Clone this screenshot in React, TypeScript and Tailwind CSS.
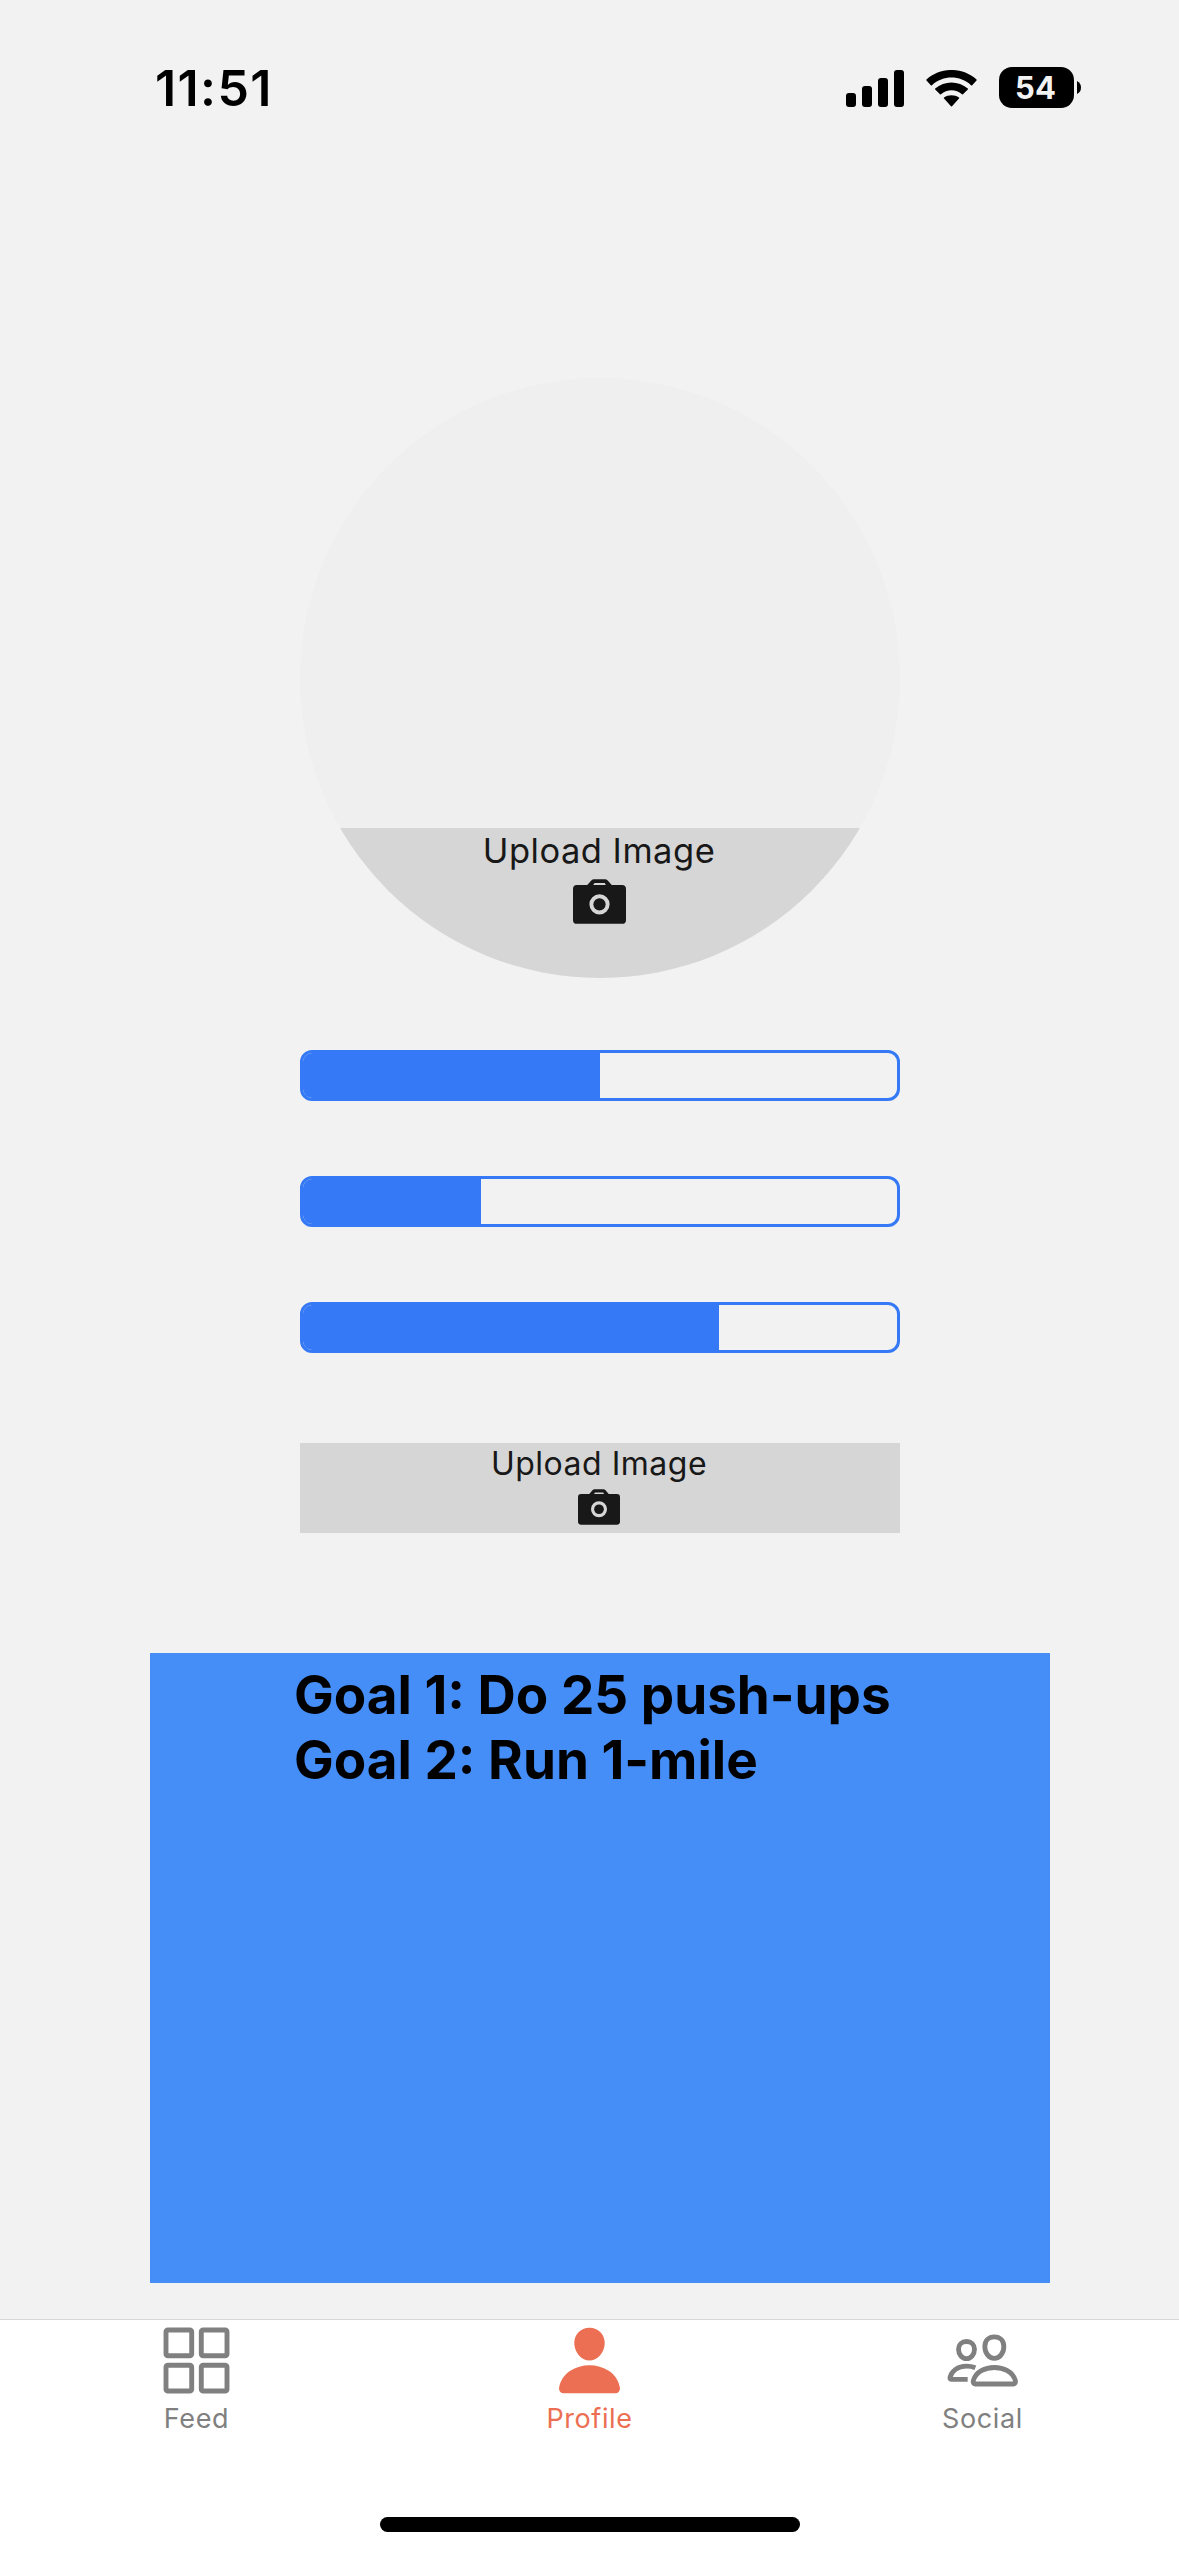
import { IoPerson } from 'react-icons/io5';
import { clsx } from 'clsx';

const progress = [50, 30, 70];
const goals = ['Goal 1: Do 25 push-ups', 'Goal 2: Run 1-mile'];

const tabs = [
  { label: 'Feed', icon: GridIcon, active: false },
  { label: 'Profile', icon: IoPerson, active: true },
  { label: 'Social', icon: PeopleIcon, active: false },
];

function GridIcon({ className }: { className?: string }) {
  return (
    <svg viewBox="0 0 75 75" className={className} fill="none" stroke="currentColor" strokeWidth="4.900" aria-hidden="true">
      <rect x="7" y="7" width="25.700" height="25.700" rx="1.800" />
      <rect x="42.300" y="7" width="25.700" height="25.700" rx="1.800" />
      <rect x="7" y="42.300" width="25.700" height="25.700" rx="1.800" />
      <rect x="42.300" y="42.300" width="25.700" height="25.700" rx="1.800" />
    </svg>
  );
}

function PeopleIcon({ className }: { className?: string }) {
  return (
    <svg viewBox="75 70 225 225" className={className} fill="none" stroke="currentColor" strokeWidth="14.500" aria-hidden="true">
      <path d="M251.500 141C251.500 160 239 176 223 176S194.500 160 194.500 141C194.500 123 206 111.500 223 111.500S251.500 123 251.500 141Z" />
      <path d="M163.500 149C163.500 164 153 177 139.500 177S115.500 164 115.500 149C115.500 135 125 125.500 139.500 125.500S163.500 135 163.500 149Z" />
      <path d="M166 253H280Q288 252 286 243C279 216 250 203.500 223 203.500S167 216 160 243Q158 252 166 253Z" />
      <path d="M166 204C157 200.500 148 199.500 139 199.500C113 199.500 95 214 90 233Q89 239 95 239H143" />
    </svg>
  );
}

function CameraIcon({ className }: { className?: string }) {
  return (
    <svg viewBox="0 0 160 135" className={className} fill="currentColor" aria-hidden="true">
      <path
        fillRule="evenodd"
        d="M12 18H43L56 3Q59 0 63 0H97Q101 0 104 3L117 18H148Q160 18 160 30V123Q160 135 148 135H12Q0 135 0 123V30Q0 18 12 18ZM61 18H99L96 12H65ZM80 45.500A30.500 30.500 0 1 0 80 106.500A30.500 30.500 0 1 0 80 45.500Z"
      />
      <circle cx="80" cy="76" r="18.500" />
    </svg>
  );
}

function StatusBar() {
  return (
    <header className="flex h-[378px] items-start justify-between pl-[155px] pr-[98px] pt-[58px] text-black">
      <span className="text-[50px] font-semibold leading-[60px] tracking-[1.4px]">11:51</span>
      <div className="flex items-center pt-[9px]">
        <svg viewBox="0 0 58 37" className="mr-[22px] mt-[1px] h-[37px] w-[58px]">
          <rect y="23" width="10" height="14" rx="3" />
          <rect x="16" y="16" width="10" height="21" rx="3" />
          <rect x="32" y="8" width="10" height="29" rx="3" />
          <rect x="48" width="10" height="37" rx="3" />
        </svg>
        <svg viewBox="0 0 51 37" className="mr-[22px] mt-[1px] h-[37px] w-[51px]">
          <path d="M.5 10.500Q0 10 .5 9.500C14.500-3.200 36.500-3.200 50.500 9.500Q51 10 50.500 10.500L46.200 15.200Q45.600 15.700 45 15.200C34 5 17 5 6 15.200Q5.400 15.700 4.800 15.200Z" />
          <path d="M9.200 19.500Q8.700 19 9.200 18.500C18.500 10.500 32.500 10.500 41.800 18.500Q42.300 19 41.800 19.500L37 24.300Q36.500 24.800 36 24.300C30 19 21 19 15 24.300Q14.500 24.800 14 24.300Z" />
          <path d="M18 28.500Q17.500 28 18 27.500C22.300 24.500 28.700 24.500 33 27.500Q33.500 28 33 28.500L26 36.200Q25.500 36.700 25 36.200Z" />
        </svg>
        <div className="flex h-[41px] w-[75px] items-center justify-center rounded-[13px] bg-black pr-[2px]">
          <span className="text-[31px] font-bold leading-[41px] text-[#f2f2f2]">54</span>
        </div>
        <svg viewBox="0 0 4 13" className="ml-[3px] h-[13px] w-1">
          <path d="M0 0Q4 2 4 6.500T0 13Z" />
        </svg>
      </div>
    </header>
  );
}

function ProgressBar({ value }: { value: number }) {
  return (
    <div className="h-[51px] w-[600px] overflow-hidden rounded-xl border-[3px] border-[#3579f6]">
      <div className="h-full bg-[#3579f6]" style={{ width: `${value}%` }} />
    </div>
  );
}

function TabBar() {
  return (
    <nav className="flex h-[237px] flex-col items-center border-t border-[#d8d8d8] bg-white">
      <div className="flex w-full pt-[3px]">
        {tabs.map(({ label, icon: Icon, active }) => (
          <div
            key={label}
            className={clsx('flex flex-1 flex-col items-center', active ? 'text-[#ec6f53]' : 'text-[#808080]')}
          >
            <Icon className="size-[75px]" />
            <span className="mt-[5px] text-[27px] leading-[32px] tracking-[0.6px]">{label}</span>
          </div>
        ))}
      </div>
      <div className="mb-[24px] mt-auto h-[15px] w-[420px] rounded-full bg-black" />
    </nav>
  );
}

export default function App() {
  return (
    <div className="flex h-[2556px] w-[1179px] flex-col overflow-hidden bg-[#f2f2f2] font-['Inter',sans-serif]">
      <StatusBar />

      <main className="ml-[150px] flex w-[900px] flex-1 flex-col items-center">
        {/* Avatar */}
        <div className="flex size-[600px] shrink-0 flex-col justify-end overflow-hidden rounded-full bg-[#efefef]">
          <button className="flex h-[150px] flex-col items-center bg-[#d6d6d6] pr-[2px] pt-[1px] text-[#181818]">
            <span className="text-[34.500px] leading-[44px] tracking-[0.5px]">Upload Image</span>
            <CameraIcon className="mt-[6px] h-[45px] w-[53px]" />
          </button>
        </div>

        <div className="mt-[72px] flex flex-col gap-[75px]">
          {progress.map((value) => (
            <ProgressBar key={value} value={value} />
          ))}
        </div>

        <button className="mt-[90px] flex h-[90px] w-[600px] flex-col items-center bg-[#d6d6d6] pr-[2px] pt-[1px] text-[#181818]">
          <span className="text-[32px] leading-[40px] tracking-[0.5px]">Upload Image</span>
          <CameraIcon className="mt-[5px] h-[36px] w-[42px]" />
        </button>

        {/* Goals */}
        <section className="mt-[120px] h-[630px] w-full bg-[#468ef7] pl-[144px] pt-[10px] text-black">
          {goals.map((goal) => (
            <p key={goal} className="text-[53px] font-bold leading-[65px]">
              {goal}
            </p>
          ))}
        </section>
      </main>

      <TabBar />
    </div>
  );
}
